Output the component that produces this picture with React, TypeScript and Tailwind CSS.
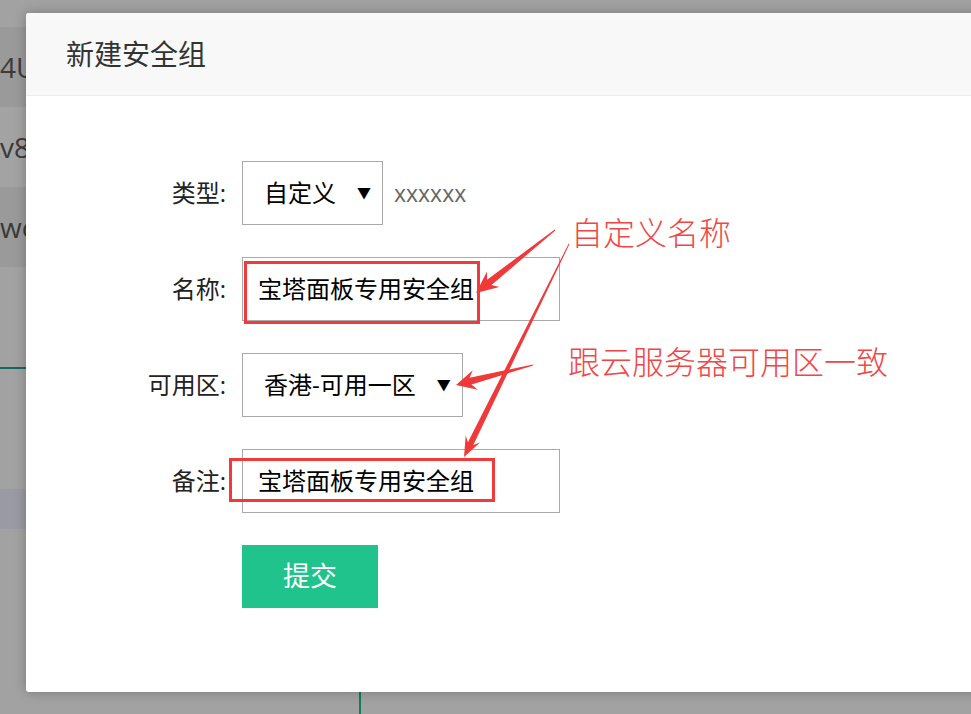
import React from "react";

type Pt = [number, number];

const bgRows = [
  { h: "h-[27px]", tone: "bg-[#a2a2a2]", text: "" },
  { h: "h-[80px]", tone: "bg-[#9a9a9a]", text: "4U" },
  { h: "h-[80px]", tone: "bg-[#a3a3a3]", text: "v83" },
  { h: "h-[80px]", tone: "bg-[#9a9a9a]", text: "wo" },
];

// tapered red arrow, thin at the tail and thick at the head
function arrowPoints(tail: Pt, tip: Pt, headLen = 20, headHalf = 9, shaft = 3) {
  const dx = tip[0] - tail[0];
  const dy = tip[1] - tail[1];
  const len = Math.hypot(dx, dy);
  const ux = dx / len;
  const uy = dy / len;
  const nx = -uy;
  const ny = ux;
  const bx = tip[0] - ux * headLen;
  const by = tip[1] - uy * headLen;
  const back = 5;
  const pts: Pt[] = [
    [tail[0] + nx * 0.5, tail[1] + ny * 0.5],
    [bx + ux * back + nx * shaft, by + uy * back + ny * shaft],
    [bx + nx * headHalf, by + ny * headHalf],
    tip,
    [bx - nx * headHalf, by - ny * headHalf],
    [bx + ux * back - nx * shaft, by + uy * back - ny * shaft],
    [tail[0] - nx * 0.5, tail[1] - ny * 0.5],
  ];
  return pts.map((p) => `${p[0].toFixed(1)},${p[1].toFixed(1)}`).join(" ");
}

function Field({ label, children }: { label: string; children: React.ReactNode }) {
  return (
    <div className="flex items-center gap-[16px] h-[64px]">
      <div className="w-[200px] text-right text-[24px] text-[#222] leading-none">{label}</div>
      {children}
    </div>
  );
}

function Select({ value }: { value: string }) {
  return (
    <div className="h-[64px] inline-flex items-center border border-[#a9a9a9] pl-[21px] pr-[11px] text-[24px] text-black">
      <span>{value}</span>
      <span className="ml-[21px] text-[14px] leading-none">▼</span>
    </div>
  );
}

function TextInput({ value }: { value: string }) {
  return (
    <div className="h-[64px] w-[318px] flex items-center border border-[#a9a9a9] pl-[15px] text-[24px] text-black">
      {value}
    </div>
  );
}

export default function App() {
  return (
    <div className="relative w-[971px] h-[714px] overflow-hidden bg-[#a2a2a2] font-['Open_Sans','Noto_Sans_CJK_SC',sans-serif]">
      {/* page behind the mask */}
      <div className="flex flex-col">
        {bgRows.map((r, i) => (
          <div key={i} className={`${r.h} ${r.tone} flex items-center text-[28px] text-[#3a3a3a]`}>
            <span>{r.text}</span>
          </div>
        ))}
        <div className="h-[100px]" />
        <div className="h-[2px] bg-[#0f6b5b]" />
        <div className="h-[120px]" />
        <div className="h-[40px] bg-[#9a9aa5]" />
        <div className="flex-1" />
      </div>
      <div className="absolute left-[359px] top-[680px] w-[2px] h-[40px] bg-[#137a5a]" />

      {/* dialog */}
      <div className="absolute left-[26px] top-[13px] w-[960px] h-[679px] bg-white rounded-[3px] shadow-[0_0_12px_rgba(0,0,0,0.25)] overflow-hidden">
        <div className="h-[83px] bg-[#f8f8f8] border-b border-[#ececec] flex items-center pl-[40px] text-[28px] text-[#333]">
          新建安全组
        </div>
        <div className="pt-[65px] flex flex-col gap-[32px]">
          <Field label="类型:">
            <Select value="自定义" />
            <span className="-ml-[5px] text-[23px] text-[#666]">xxxxxx</span>
          </Field>
          <Field label="名称:">
            <TextInput value="宝塔面板专用安全组" />
          </Field>
          <Field label="可用区:">
            <Select value="香港-可用一区" />
          </Field>
          <Field label="备注:">
            <TextInput value="宝塔面板专用安全组" />
          </Field>
          <div className="pl-[216px]">
            <button className="w-[136px] h-[63px] bg-[#1fc38b] text-white text-[27px]">提交</button>
          </div>
        </div>
      </div>

      {/* annotation layer */}
      <div className="absolute left-[244px] top-[261px] w-[236px] h-[63px] border-[3px] border-[#ef3b3b]" />
      <div className="absolute left-[229px] top-[458px] w-[266px] h-[44px] border-[3px] border-[#ef3b3b]" />
      <svg className="absolute left-0 top-0 pointer-events-none" width="971" height="714" viewBox="0 0 971 714">
        <polygon points={arrowPoints([555, 230], [476, 293], 22, 10, 3.5)} fill="#f03a3a" />
        <polygon points={arrowPoints([569, 244], [464, 457], 20, 8, 3)} fill="#f03a3a" />
        <polygon points={arrowPoints([533, 365], [456, 385], 20, 10, 3.5)} fill="#f03a3a" />
      </svg>
      <span className="absolute left-[571px] top-[217px] text-[32px] leading-none text-[#f24545] font-light">自定义名称</span>
      <span className="absolute left-[568px] top-[346px] text-[32px] leading-none text-[#f24545] font-light">跟云服务器可用区一致</span>
    </div>
  );
}
